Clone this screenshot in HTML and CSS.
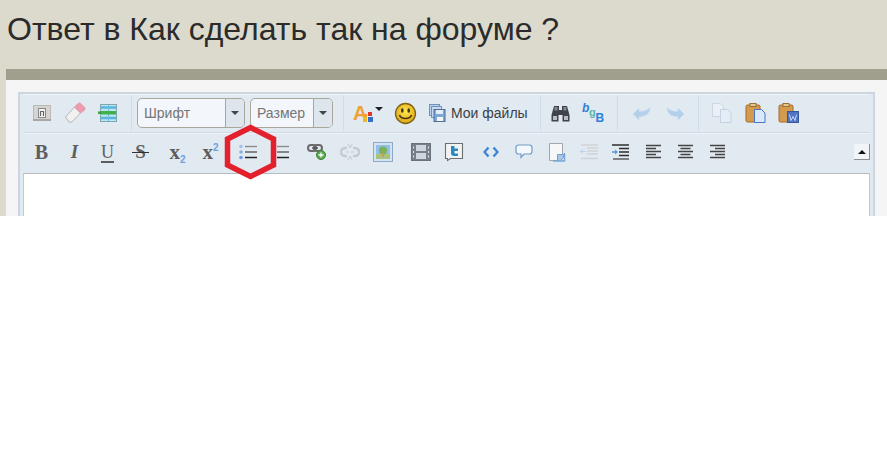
FILE: index.html
```html
<!DOCTYPE html>
<html lang="ru">
<head>
<meta charset="utf-8">
<title>Ответ</title>
<link rel="stylesheet" href="styles.css">
</head>
<body>
<div class="page">
  <h1 class="title">Ответ в Как сделать так на форуме ?</h1>
  <div class="panel">
    <div class="bar"></div>
    <div class="content">
      <div class="editor">
        <div class="row row-top">
          <span class="btn"><svg width="20" height="20" viewBox="0 0 20 20"><rect x="1.500" y="2.500" width="17" height="15" fill="#d6d4d1" stroke="#bcbab7"/><rect x="1" y="16" width="18" height="2" fill="#a9a7a4"/><rect x="6.500" y="5.500" width="7" height="9" fill="#f4f4f4" stroke="#88878a"/><path d="M8.500 13V8.500h3V13" fill="none" stroke="#66666a" stroke-width="1.200"/></svg></span>
          <span class="btn"><svg width="22" height="22" viewBox="0 0 22 22"><path d="M1.500 15 10.500 5l6 6-8.500 9H5z" fill="#f1f1f1" stroke="#b5b5b5"/><path d="M10.500 5l3.500-3.500c1-.8 2-.6 3 .2l3.500 3.500c.8 1 .7 2-.1 3L16.500 11z" fill="#ec9cab" stroke="#e08d9d" stroke-width=".6"/></svg></span>
          <span class="btn"><svg width="20" height="20" viewBox="0 0 20 20"><rect x="2.500" y="1.500" width="16" height="17" fill="#bde6f0" stroke="#7fa5ad"/><path d="M3 4.500h15M3 15h15" stroke="#59b4de" stroke-width="2.500"/><path d="M10.500 2v6M10.500 11v7" stroke="#6cc0e2"/><rect x="3" y="8" width="15" height="3.500" fill="#3fb04a"/><path d="M0 9.700h3" stroke="#39a040" stroke-width="2.500"/></svg></span>
          <span class="sep sep-a"></span>
          <span class="select select-font"><span class="select-text">Шрифт</span><span class="select-arrow"></span></span>
          <span class="select select-size"><span class="select-text">Размер</span><span class="select-arrow"></span></span>
          <span class="sep sep-b"></span>
          <span class="color-btn"><span class="color-a">A</span><svg class="color-dots" width="10" height="10" viewBox="0 0 10 10"><rect x="5" y="0" width="4" height="4" fill="#d9372c"/><rect x="0" y="2" width="4" height="3" fill="#f0a030"/><rect x="5" y="5" width="5" height="5" fill="#2f6fd0"/><rect x="0" y="5" width="4" height="5" fill="#eebb22"/></svg><span class="caret"></span></span>
          <span class="btn btn-smile"><svg width="23" height="23" viewBox="0 0 23 23"><defs><radialGradient id="sm" cx=".5" cy=".4" r=".6"><stop offset="0" stop-color="#ffe94f"/><stop offset="1" stop-color="#dca416"/></radialGradient></defs><circle cx="11.500" cy="11.500" r="10" fill="url(#sm)" stroke="#7f6414" stroke-width="1.300"/><ellipse cx="8.300" cy="8.500" rx="1.300" ry="2.200" fill="#43340c"/><ellipse cx="14.700" cy="8.500" rx="1.300" ry="2.200" fill="#43340c"/><path d="M5.500 13c1.500 4.500 10.500 4.500 12 0" fill="none" stroke="#43340c" stroke-width="1.500"/></svg></span>
          <span class="files"><svg width="17" height="18" viewBox="0 0 17 18"><rect x=".5" y=".5" width="10" height="11" fill="#b8d0ec" stroke="#6f93bd"/><rect x="2.500" y="2.500" width="10" height="11" fill="#c6d9f0" stroke="#6f93bd"/><rect x="5" y="5.500" width="11" height="12" fill="#7fa8da" stroke="#4f6f99"/><rect x="7" y="6" width="7" height="4" fill="#e4eefa"/><rect x="8" y="13" width="6" height="4" fill="#f4f6f8"/></svg><span class="files-text">Мои файлы</span></span>
          <span class="sep sep-c"></span>
          <span class="btn"><svg width="19" height="17" viewBox="0 0 19 17"><path d="M3 1h5v4h3V1h5l2.500 9v6.500H11.500V10h-4v6.500H.5V10z" fill="#3f434a"/><rect x="3.500" y="2" width="3" height="3.500" fill="#85888c"/><rect x="12.500" y="2" width="3" height="3.500" fill="#85888c"/><rect x="2" y="11" width="4" height="4" fill="#b8bcc2"/><rect x="13" y="11" width="4" height="4" fill="#b8bcc2"/></svg></span>
          <span class="btn"><svg class="bb" width="22" height="22" viewBox="0 0 22 22"><text x="0" y="10" class="bb-b">b</text><text x="7" y="14" class="bb-g">g</text><text x="13.500" y="20" class="bb-c">B</text></svg></span>
          <span class="sep sep-d"></span>
          <span class="btn"><svg width="20" height="16" viewBox="0 0 20 16"><path d="M1 9 7 3v3.500c5 0 8-1 11-4-.5 7-5 9-11 9V15z" fill="#b3cfe9" stroke="#c8dcef" stroke-width=".6"/></svg></span>
          <span class="btn btn-n"><svg width="20" height="16" viewBox="0 0 20 16"><path d="M19 9 13 3v3.500c-5 0-8-1-11-4 .5 7 5 9 11 9V15z" fill="#b3cfe9" stroke="#c8dcef" stroke-width=".6"/></svg></span>
          <span class="sep sep-e"></span>
          <span class="btn"><svg width="20" height="20" viewBox="0 0 20 20"><path d="M.5 .5h8l3 3v10H.5z" fill="#eaf0f6" stroke="#cbd6e2"/><path d="M8.500 6.500h7l3.500 3.500v9.500H8.500z" fill="#e4edf6" stroke="#c5d2e0"/></svg></span>
          <span class="btn"><svg width="21" height="20" viewBox="0 0 21 20"><rect x="1" y="2" width="14" height="17" rx="1.500" fill="#d49a4e" stroke="#a06a28"/><rect x="5" y=".5" width="6" height="3" fill="#e9c88f" stroke="#9a7038"/><path d="M9.500 6.500h7l3.500 3.500v9.500H9.500z" fill="#d9e8fa" stroke="#4a76c4"/></svg></span>
          <span class="btn"><svg width="21" height="20" viewBox="0 0 21 20"><rect x="1" y="2" width="14" height="17" rx="1.500" fill="#d49a4e" stroke="#a06a28"/><rect x="5" y=".5" width="6" height="3" fill="#e9c88f" stroke="#9a7038"/><rect x="9.500" y="8.500" width="11" height="11" fill="#4f74c4" stroke="#36589c"/><path d="M11.500 11.500l1.500 6 2-4 2 4 1.500-6" fill="none" stroke="#c9d8f4" stroke-width="1"/></svg></span>
        </div>
        <div class="row row-bottom">
          <span class="btn fmt fmt-b">B</span>
          <span class="btn fmt fmt-i">I</span>
          <span class="btn fmt fmt-u">U</span>
          <span class="btn fmt fmt-s">S</span>
          <span class="btn fmt fmt-x gap-4">x<sub class="idx idx-sub">2</sub></span>
          <span class="btn fmt fmt-x">x<sup class="idx idx-sup">2</sup></span>
          <span class="btn gap-4"><svg width="18" height="16" viewBox="0 0 18 16"><circle cx="2" cy="2.500" r="1.800" fill="#a9c2e6"/><circle cx="2" cy="8" r="1.800" fill="#8bb0e0"/><circle cx="2" cy="13.500" r="1.800" fill="#6f9ce0"/><path d="M6 2.500h12" stroke="#8c8c8c" stroke-width="1.400"/><path d="M6 8h12" stroke="#5c5c5c" stroke-width="1.400"/><path d="M6 13.500h12" stroke="#222" stroke-width="1.500"/></svg></span>
          <span class="btn gap-1"><svg width="18" height="16" viewBox="0 0 18 16"><path d="M4 2.500h12" stroke="#8c8c8c" stroke-width="1.400"/><path d="M4 8h12" stroke="#5c5c5c" stroke-width="1.400"/><path d="M4 13.500h12" stroke="#222" stroke-width="1.500"/><path d="M1.500 1v3M1.500 6.500v3M1.500 12v3" stroke="#d8c4cc" stroke-width="1.200"/></svg></span>
          <span class="btn gap-2"><svg width="20" height="18" viewBox="0 0 20 18"><rect x="1" y="2" width="8" height="6" rx="3" fill="none" stroke="#6a6a6a" stroke-width="2"/><rect x="7" y="2" width="8" height="6" rx="3" fill="none" stroke="#6a6a6a" stroke-width="2"/><path d="M5 5h6" stroke="#555" stroke-width="1.500"/><circle cx="14" cy="12" r="4.500" fill="#5aa84f" stroke="#3f7f38"/><path d="M14 9.500v5M11.500 12h5" stroke="#fff" stroke-width="1.300"/></svg></span>
          <span class="btn"><svg width="20" height="18" viewBox="0 0 20 18"><path d="M7 5H5a4 4 0 0 0 0 8h2M13 5h2a4 4 0 0 1 0 8h-2" fill="none" stroke="#c3cbd3" stroke-width="2.400"/><path d="M6 9h3M11 9h3M8 1l2 4 2-4M8 17l2-4 2 4" fill="none" stroke="#c3cbd3"/></svg></span>
          <span class="btn"><svg width="20" height="20" viewBox="0 0 20 20"><rect x=".5" y=".5" width="19" height="19" fill="#d4e2f2" stroke="#8ea9c8"/><rect x="3" y="3" width="14" height="14" fill="#8fc0e6"/><rect x="3" y="12" width="14" height="5" fill="#a8c47a"/><circle cx="10" cy="8.500" r="4" fill="#7fb05a"/><rect x="9" y="11" width="2" height="4" fill="#c89c60"/></svg></span>
          <span class="btn gap-5"><svg width="20" height="18" viewBox="0 0 20 18"><rect x=".5" y=".5" width="19" height="17" fill="#78818a" stroke="#6a727a"/><path d="M3 4.500h-1M3 9h-1M3 13.500h-1M18 4.500h-1M18 9h-1M18 13.500h-1" stroke="#dfe5ea" stroke-width="2"/><rect x="5" y="2" width="10" height="6" fill="#cdd6de"/><rect x="5" y="10" width="10" height="6" fill="#cdd6de"/></svg></span>
          <span class="btn"><svg width="20" height="20" viewBox="0 0 20 20"><path d="M1.500 1.500h17v15h-12l-3 2v-2h-2z" fill="#f1f2f2" stroke="#6c6f74" stroke-width="1.100"/><path d="M7 4v7c0 2 1 3 3 3h4v-2.500h-3.500V9H14V6.500h-3.500V4z" fill="#2b87c4"/></svg></span>
          <span class="btn gap-4"><svg width="16" height="12" viewBox="0 0 16 12"><path d="M5.500 1.500 1.500 6l4 4.500M10.500 1.500l4 4.500-4 4.500" fill="none" stroke="#3f86d6" stroke-width="2.400"/></svg></span>
          <span class="btn"><svg width="18" height="16" viewBox="0 0 18 16"><path d="M3.500 1h11c1.500 0 2.500 1 2.500 2.500v4c0 1.500-1 2.500-2.500 2.500H9l-3 3.500V10H3.500C2 10 1 9 1 7.500v-4C1 2 2 1 3.500 1z" fill="#f4f8fc" stroke="#6f9cc8" stroke-width="1.200"/></svg></span>
          <span class="btn"><svg width="18" height="20" viewBox="0 0 18 20"><path d="M1.500 1.500h13v11l-5 6h-8z" fill="#f6f7f8" stroke="#a2a6ac"/><path d="M9.500 18.500v-6h6v3l-3 3z" fill="#a9c6e8" stroke="#6f9ed8"/><path d="M5 19h11.500v-8" fill="none" stroke="#7aa6dc" stroke-width="1.500"/></svg></span>
          <span class="btn btn-n"><svg width="18" height="16" viewBox="0 0 18 16"><path d="M7 4h11M7 7h11M7 10h11M1 14.500h17M1 1h17" stroke="#cfd3d7" stroke-width="1.400"/><path d="M6 7.500H0M3 5 .5 7.500 3 10" fill="none" stroke="#bcd2ea"/></svg></span>
          <span class="btn btn-n"><svg width="18" height="17" viewBox="0 0 18 17"><path d="M0 1h17M7 4.500h10M7 8h10M7 11.500h10" stroke="#2e2e2e" stroke-width="1.400"/><path d="M1 15h16" stroke="#555" stroke-width="1.400"/><path d="M0 8h5" stroke="#5a96da" stroke-width="1.500"/><path d="M3 5.500 6 8l-3 2.500z" fill="#5a96da"/></svg></span>
          <span class="btn btn-n"><svg width="17" height="16" viewBox="0 0 17 16"><path d="M1 1.500h15M1 4.500h10M1 7.500h15M1 10.500h10M1 13.500h15" stroke="#444" stroke-width="1.400"/></svg></span>
          <span class="btn btn-n"><svg width="17" height="16" viewBox="0 0 17 16"><path d="M1 1.500h15M3.500 4.500h10M1 7.500h15M3.500 10.500h10M1 13.500h15" stroke="#444" stroke-width="1.400"/></svg></span>
          <span class="btn btn-n"><svg width="17" height="16" viewBox="0 0 17 16"><path d="M1 1.500h15M6 4.500h10M1 7.500h15M6 10.500h10M1 13.500h15" stroke="#444" stroke-width="1.400"/></svg></span>
          <span class="collapse"><span class="collapse-tri"></span></span>
        </div>
        <div class="textarea"></div>
        <svg class="marker" width="53" height="56" viewBox="0 0 53 56"><path d="M26.500 3.500 49.500 15v26L26.500 52.500 3.500 41V15z" fill="none" stroke="#e3202b" stroke-width="5.500"/></svg>
      </div>
    </div>
  </div>
</div>
</body>
</html>
```
FILE: styles.css
```css
* { box-sizing: border-box; }
html, body { margin: 0; padding: 0; background: #fff; }
.page {
  height: 216px;
  overflow: hidden;
  background: #dcdacc;
  font-family: "Liberation Sans", Arial, sans-serif;
}
.title {
  margin: 0;
  height: 69px;
  padding: 11px 0 0 7px;
  font-size: 32px;
  line-height: 36px;
  font-weight: 400;
  color: #2b2b2b;
}
.panel { margin-left: 6px; }
.bar { height: 11px; background: #a09e8c; }
.content { background: #f5f5f5; padding: 12px 12px 0 12px; height: 300px; }
.editor {
  position: relative;
  border: 2px solid #ccd6e1;
  background: #e1e9f1;
  padding: 0 3px;
  height: 300px;
}
.row { display: flex; align-items: center; margin-right: 0; }
.row-top { height: 39px; padding-left: 2px; border-bottom: 1px solid #d0dae4; box-shadow: 0 1px 0 #eef3f7, inset 0 1px 0 #eff3f7; }
.row-bottom { height: 40px; padding: 0 0 2px 2px; }
.btn { flex: none; width: 33px; height: 24px; display: flex; align-items: center; justify-content: center; }
.btn-n { width: 32px; }
.btn-smile { margin: 0 7px 0 7px; }
.gap-1 { margin-left: 1px; }
.gap-2 { margin-left: 2px; }
.gap-4 { margin-left: 4px; }
.gap-5 { margin-left: 5px; }
.sep { flex: none; width: 1px; height: 36px; background: #d2dce6; }
.sep-a { margin: 0 5px 0 7px; }
.sep-b { margin: 0 9px 0 10px; }
.sep-c { margin: 0 3px 0 12px; }
.sep-d { margin: 0 8px 0 7px; }
.sep-e { margin: 0 7px 0 7px; }
.select {
  flex: none;
  display: flex;
  height: 30px;
  border: 1px solid #a9a79b;
  border-radius: 5px;
  background: #f3f7fb;
  overflow: hidden;
  font-size: 14px;
  color: #757575;
}
.select-font { width: 108px; margin-right: 5px; }
.select-size { width: 83px; }
.select-text { flex: 1; padding-left: 6px; line-height: 28px; }
.select-arrow { flex: none; width: 19px; border-left: 1px solid #a9a79b; background: #dde5ed; position: relative; }
.select-arrow::after {
  content: "";
  position: absolute;
  left: 5px;
  top: 12px;
  border: 4px solid transparent;
  border-top-color: #444;
  border-bottom-width: 0;
}
.color-btn { flex: none; width: 29px; height: 24px; position: relative; display: block; }
.color-a { position: absolute; left: 0; top: 1px; font-size: 20px; line-height: 22px; font-weight: 700; color: #f0a030; }
.color-dots { position: absolute; left: 10px; top: 11px; }
.caret { position: absolute; left: 22px; top: 6px; border: 4px solid transparent; border-top-color: #222; border-bottom-width: 0; }
.files { flex: none; display: flex; align-items: center; gap: 5px; font-size: 14px; color: #3a3f45; }
.files-text { white-space: nowrap; }
.bb text { font-family: "Liberation Sans", Arial, sans-serif; font-weight: 700; }
.bb-b { font-size: 12px; font-style: italic; fill: #2f7fd8; }
.bb-g { font-size: 11px; fill: #58b8a8; }
.bb-c { font-size: 12px; fill: #2f7fd8; }
.fmt { font-family: "Liberation Serif", "Times New Roman", serif; color: #5e5e5e; font-size: 20px; line-height: 24px; position: relative; }
.fmt-b { font-weight: 700; }
.fmt-i { font-weight: 700; font-style: italic; font-size: 19px; }
.fmt-u { font-size: 18px; text-decoration: underline; text-underline-offset: 3px; text-decoration-thickness: 1.500px; }
.fmt-s { font-weight: 700; font-size: 19px; }
.fmt-s::after { content: ""; position: absolute; left: 8px; right: 8px; top: 12px; height: 1px; background: #333; }
.fmt-x { display: block; text-align: center; font-weight: 700; font-size: 21px; }
.idx { font-family: "Liberation Sans", Arial, sans-serif; font-size: 10px; line-height: 0; color: #6f9fdc; }
.idx-sub { vertical-align: -4px; }
.idx-sup { vertical-align: 8px; }
.collapse {
  flex: none;
  width: 16px;
  height: 16px;
  margin-left: auto;
  background: #f2f5f8;
  border-right: 1px solid #8c9096;
  border-bottom: 1px solid #8c9096;
  display: flex;
  align-items: center;
  justify-content: center;
}
.collapse-tri { border: 4px solid transparent; border-bottom-color: #111; border-top-width: 0; }
.textarea { height: 200px; background: #fff; border: 1px solid #c3c9cf; border-top-color: #b4babf; }
.marker { position: absolute; left: 204px; top: 30px; }
```
